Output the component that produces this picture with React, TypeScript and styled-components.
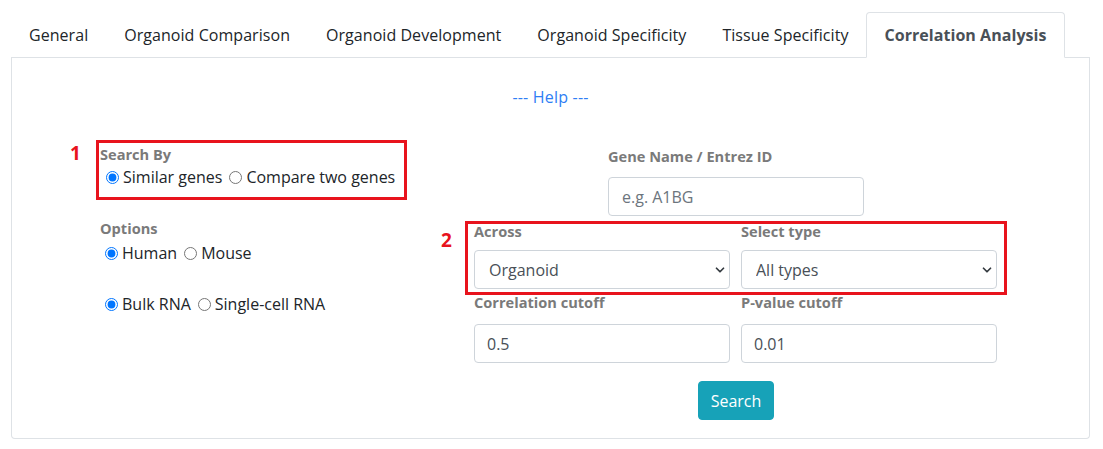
import React from "react";
import styled, { createGlobalStyle } from "styled-components";
import { ChevronDown } from "lucide-react";

const Global = createGlobalStyle`
  html, body { margin: 0; padding: 0; background: #fff; }
  body {
    font-family: "Open Sans", "Noto Sans", "Liberation Sans", sans-serif;
    font-size: 16px;
    line-height: 1.5;
    color: #212529;
  }
  * { box-sizing: border-box; }
`;

const Page = styled.div`
  width: 1103px;
  padding: 12px 13px 0 11px;
`;

const TabBar = styled.ul`
  display: flex;
  list-style: none;
  margin: 0;
  padding: 0;
  border-bottom: 1px solid #dee2e6;
`;

const Tab = styled.li<{ $active?: boolean }>`
  margin-bottom: -1px;
  padding: 10px 17px;
  border: 1px solid ${(p) => (p.$active ? "#dee2e6" : "transparent")};
  border-bottom-color: ${(p) => (p.$active ? "#fff" : "transparent")};
  border-top-left-radius: 4px;
  border-top-right-radius: 4px;
  background: ${(p) => (p.$active ? "#fff" : "transparent")};
  color: ${(p) => (p.$active ? "#495057" : "#212529")};
  font-weight: ${(p) => (p.$active ? 700 : 400)};
  line-height: 24px;
  white-space: nowrap;
  letter-spacing: 0.05px;
`;

const Panel = styled.div`
  border: 1px solid #dee2e6;
  border-top: none;
  border-radius: 0 0 4px 4px;
  padding: 27px 0 17px;
  height: 381px;
`;

const HelpLink = styled.a`
  display: block;
  text-align: center;
  color: #2f7ef5;
  text-decoration: none;
  line-height: 24px;
  letter-spacing: 0.2px;
`;

const Row = styled.div`
  display: flex;
  margin-top: 31px;
  padding-left: 84px;
`;

const LeftCol = styled.div`
  display: flex;
  flex-direction: column;
  width: 311px;
`;

const RightCol = styled.div`
  display: flex;
  flex-direction: column;
  align-items: center;
  width: 542px;
  margin-left: 58px;
  padding-top: 6px;
`;

const RedBox = styled.div`
  position: relative;
  border: 3px solid #e8131d;
`;

const Marker = styled.span<{ $left: number; $top: number }>`
  position: absolute;
  left: ${(p) => p.$left}px;
  top: ${(p) => p.$top}px;
  color: #e8131d;
  font-weight: 700;
  font-size: 19px;
  line-height: 20px;
`;

const SearchBox = styled(RedBox)`
  padding: 1px 6px 8px 1px;
`;

const Label = styled.div<{ $mt?: number; $pl?: number }>`
  font-size: 14.6px;
  font-weight: 700;
  color: #7a7a7a;
  line-height: 21px;
  margin-top: ${(p) => p.$mt ?? 0}px;
  padding-left: ${(p) => p.$pl ?? 0}px;
`;

const RadioRow = styled.div<{ $mt?: number; $pl?: number }>`
  display: flex;
  align-items: center;
  line-height: 24px;
  margin-top: ${(p) => p.$mt ?? 0}px;
  padding-left: ${(p) => p.$pl ?? 1}px;
  white-space: nowrap;
`;

const RadioInput = styled.input`
  width: 13px;
  height: 13px;
  margin: 0 4px 0 5px;
  accent-color: #0075ff;
`;

const RadioText = styled.span`
  margin-right: 2px;
`;

const GeneGroup = styled.div`
  width: 256px;
  display: flex;
  flex-direction: column;
`;

const Input = styled.input<{ $mt?: number }>`
  width: 100%;
  height: 39px;
  margin-top: ${(p) => p.$mt ?? 10}px;
  padding: 6px 13px;
  border: 1px solid #ced4da;
  border-radius: 4px;
  font-family: inherit;
  font-size: 16px;
  color: #495057;
  &::placeholder { color: #6c757d; }
`;

const AcrossBox = styled(RedBox)`
  width: 542px;
  margin-top: 5px;
  padding: 0 6px 3px;
`;

const FieldGrid = styled.div`
  display: grid;
  grid-template-columns: 256px 256px;
  column-gap: 11px;
`;

const CutoffGrid = styled(FieldGrid)`
  width: 542px;
  padding: 0 9px;
`;

const Field = styled.div`
  display: flex;
  flex-direction: column;
`;

const SelectWrap = styled.div`
  position: relative;
  margin-top: 8px;
`;

const Select = styled.select`
  width: 100%;
  height: 39px;
  appearance: none;
  padding: 6px 28px 6px 14px;
  border: 1px solid #ced4da;
  border-radius: 4px;
  background: #fff;
  font-family: inherit;
  font-size: 16px;
  color: #495057;
`;

const Chevron = styled(ChevronDown)`
  position: absolute;
  right: 3px;
  top: 13px;
  pointer-events: none;
  color: #343a40;
`;

const CutoffInput = styled(Input)`
  padding-left: 12px;
`;

const Button = styled.button`
  margin-top: 18px;
  height: 39px;
  padding: 0 12px;
  border: 1px solid #17a2b8;
  border-radius: 4px;
  background: #17a2b8;
  color: #fff;
  font-family: inherit;
  font-size: 16px;
`;

const tabs = [
  "General",
  "Organoid Comparison",
  "Organoid Development",
  "Organoid Specificity",
  "Tissue Specificity",
  "Correlation Analysis",
];

export default function App() {
  return (
    <Page>
      <Global />
      <TabBar>
        {tabs.map((t) => (
          <Tab key={t} $active={t === "Correlation Analysis"}>
            {t}
          </Tab>
        ))}
      </TabBar>
      <Panel>
        <HelpLink href="#">--- Help ---</HelpLink>
        <Row>
          <LeftCol>
            <SearchBox>
              <Marker $left={-29} $top={0}>1</Marker>
              <Label>Search By</Label>
              <RadioRow>
                <RadioInput type="radio" name="sb" defaultChecked />
                <RadioText>Similar genes</RadioText>
                <RadioInput type="radio" name="sb" />
                <RadioText>Compare two genes</RadioText>
              </RadioRow>
            </SearchBox>
            <Label $mt={18} $pl={4}>Options</Label>
            <RadioRow $mt={2} $pl={4}>
              <RadioInput type="radio" name="sp" defaultChecked />
              <RadioText>Human</RadioText>
              <RadioInput type="radio" name="sp" />
              <RadioText>Mouse</RadioText>
            </RadioRow>
            <RadioRow $mt={27} $pl={4}>
              <RadioInput type="radio" name="rna" defaultChecked />
              <RadioText>Bulk RNA</RadioText>
              <RadioInput type="radio" name="rna" />
              <RadioText>Single-cell RNA</RadioText>
            </RadioRow>
          </LeftCol>
          <RightCol>
            <GeneGroup>
              <Label>Gene Name / Entrez ID</Label>
              <Input placeholder="e.g. A1BG" />
            </GeneGroup>
            <AcrossBox>
              <Marker $left={-27} $top={6}>2</Marker>
              <FieldGrid>
                <Field>
                  <Label $mt={-3}>Across</Label>
                  <SelectWrap>
                    <Select defaultValue="Organoid">
                      <option>Organoid</option>
                      <option>Tissue</option>
                    </Select>
                    <Chevron size={14} strokeWidth={3} />
                  </SelectWrap>
                </Field>
                <Field>
                  <Label $mt={-3}>Select type</Label>
                  <SelectWrap>
                    <Select defaultValue="All types">
                      <option>All types</option>
                    </Select>
                    <Chevron size={14} strokeWidth={3} />
                  </SelectWrap>
                </Field>
              </FieldGrid>
            </AcrossBox>
            <CutoffGrid>
              <Field>
                <Label $mt={-3}>Correlation cutoff</Label>
                <CutoffInput $mt={11} defaultValue="0.5" />
              </Field>
              <Field>
                <Label $mt={-3}>P-value cutoff</Label>
                <CutoffInput $mt={11} defaultValue="0.01" />
              </Field>
            </CutoffGrid>
            <Button>Search</Button>
          </RightCol>
        </Row>
      </Panel>
    </Page>
  );
}
